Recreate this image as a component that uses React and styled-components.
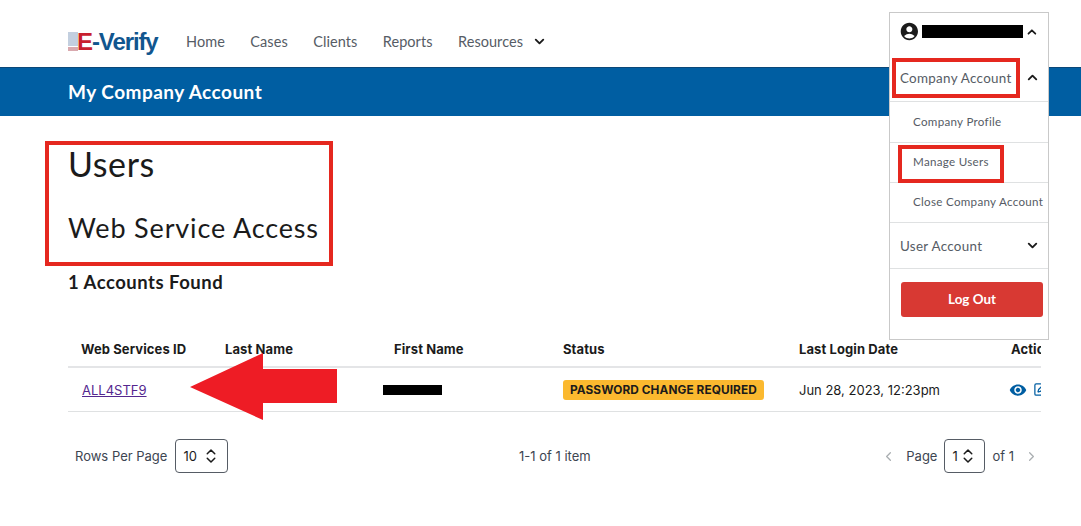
import React from 'react'
import styled, { createGlobalStyle } from 'styled-components'
import { ChevronDown, ChevronLeft, ChevronRight, ChevronUp, ChevronsUpDown, SquarePen } from 'lucide-react'
import { MdAccountCircle, MdVisibility } from 'react-icons/md'

const GlobalStyle = createGlobalStyle`
  html, body {
    margin: 0;
    padding: 0;
    background: #fff;
    overflow: hidden;
  }
  body {
    font-family: Lato, "Open Sans", sans-serif;
    color: #1b1b1b;
  }
`

const Page = styled.div`
  position: relative;
  width: 1081px;
  height: 526px;
  overflow: hidden;
`

const Header = styled.header`
  height: 67px;
  padding: 16px 0 0 68px;
  display: flex;
  align-items: center;
  box-sizing: border-box;
`

const Logo = styled.div`
  display: flex;
  align-items: center;
  width: 118px;
  font-family: "Liberation Sans", Arial, sans-serif;
  font-weight: 700;
  font-size: 24px;
  letter-spacing: -1.1px;
  color: #11568f;
  svg {
    margin-right: -1px;
  }
  span {
    color: #c8202f;
  }
`

const Nav = styled.nav`
  display: flex;
  align-items: center;
  gap: 25.5px;
`

const NavLink = styled.a`
  display: flex;
  align-items: center;
  gap: 9px;
  font-size: 14.5px;
  letter-spacing: 0.05px;
  color: #565c65;
`

const TitleBar = styled.div`
  height: 49px;
  padding: 0 0 1px 68px;
  display: flex;
  align-items: center;
  background: #005ea2;
  border-top: 1px solid #0b4778;
  box-sizing: border-box;
  color: #fff;
  font-size: 19px;
  font-weight: 700;
  letter-spacing: 0.47px;
`

const Content = styled.main`
  padding: 28px 40px 0 68px;
`

const Title = styled.h1`
  margin: 0;
  font-size: 34px;
  line-height: 40px;
  font-weight: 400;
  letter-spacing: 0.6px;
`

const SubTitle = styled.h2`
  margin: 27px 0 0;
  font-size: 27px;
  line-height: 34px;
  font-weight: 400;
  letter-spacing: 0.85px;
`

const Found = styled.h3`
  margin: 25px 0 0;
  font-size: 18.5px;
  line-height: 24px;
  font-weight: 700;
  letter-spacing: 0.5px;
`

const Table = styled.div`
  margin-top: 47px;
  overflow: hidden;
  font-family: Inter, Roboto, sans-serif;
`

const Row = styled.div`
  display: grid;
  grid-template-columns: 144px 169px 169px 236px 212px 100px;
  width: 1100px;
  padding-left: 13px;
  box-sizing: border-box;
  align-items: center;
  height: ${props => (props.$head ? '27px' : '44px')};
  padding-bottom: ${props => (props.$head ? '10px' : '0')};
  border-bottom: ${props => (props.$head ? '2px solid #e4e5e7' : '1px solid #dfe1e2')};
  font-size: 13px;
  font-weight: ${props => (props.$head ? 700 : 400)};
  letter-spacing: ${props => (props.$head ? '0.1px' : '0')};
  white-space: nowrap;
`

const IdLink = styled.a`
  padding-left: 1px;
  color: #54278f;
  text-decoration: underline;
`

const Redacted = styled.div`
  width: ${props => props.$width}px;
  height: ${props => props.$height}px;
  background: #000;
`

const NameRedacted = styled(Redacted)`
  margin-left: -11px;
`

const Badge = styled.span`
  justify-self: start;
  padding: 0 7px;
  line-height: 20px;
  border-radius: 3px;
  background: #fbb92f;
  font-size: 11.8px;
  font-weight: 700;
  letter-spacing: 0.1px;
`

const Actions = styled.div`
  display: flex;
  align-items: center;
  gap: 6px;
  color: #005ea2;
  margin-left: -2px;
`

const Pagination = styled.div`
  margin-top: 27px;
  padding: 0 2px 0 7px;
  display: flex;
  align-items: center;
  justify-content: space-between;
  font-family: Inter, Roboto, sans-serif;
  font-size: 13px;
  color: #3d4551;
`

const PageGroup = styled.div`
  display: flex;
  align-items: center;
  gap: ${props => props.$gap}px;
`

const PrevIcon = styled(ChevronLeft)`
  margin-right: 3px;
`

const NextIcon = styled(ChevronRight)`
  margin-left: 3px;
`

const Stepper = styled.div`
  display: flex;
  align-items: center;
  justify-content: space-between;
  width: ${props => props.$width}px;
  height: 34px;
  padding: 0 7px 0 7px;
  box-sizing: border-box;
  border: 1px solid #565c65;
  border-radius: 4px;
  color: #1b1b1b;
`

const Menu = styled.aside`
  position: absolute;
  top: 12px;
  left: 889px;
  width: 160px;
  height: 328px;
  box-sizing: border-box;
  background: #fff;
  border: 1px solid #c9c9c9;
  color: #565c65;
`

const MenuTop = styled.div`
  height: 37px;
  padding: 0 9px;
  display: flex;
  align-items: center;
  color: #1b1b1b;
  svg:first-child {
    margin-right: 2px;
  }
  svg:last-child {
    margin-left: 2px;
  }
`

const MenuRow = styled.div`
  height: ${props => props.$height}px;
  padding: ${props => props.$top || 0}px 8px ${props => (props.$sub ? 2 : 0)}px ${props => (props.$sub ? 23 : 10)}px;
  display: flex;
  align-items: center;
  justify-content: space-between;
  box-sizing: border-box;
  border-bottom: 1px solid #dfe1e2;
  font-size: ${props => (props.$sub ? '11.6px' : '13.4px')};
  letter-spacing: 0.3px;
  white-space: nowrap;
  svg {
    color: #1b1b1b;
  }
`

const LogOut = styled.button`
  display: block;
  width: 142px;
  height: 35px;
  margin: 13px 0 0 11px;
  padding: 0 0 1px;
  border: 0;
  border-radius: 3px;
  background: #d83933;
  color: #fff;
  font-family: inherit;
  font-size: 13.4px;
  font-weight: 700;
`

const Callout = styled.div`
  position: absolute;
  top: ${props => props.$top}px;
  left: ${props => props.$left}px;
  width: ${props => props.$width}px;
  height: ${props => props.$height}px;
  box-sizing: border-box;
  border: 4px solid #e5281f;
  pointer-events: none;
`

const Arrow = styled.svg`
  position: absolute;
  top: 353px;
  left: 190px;
`

const App = () => (
  <Page>
    <GlobalStyle />
    <Header>
      <Logo>
        <svg width="10" height="20" viewBox="0 0 10 20">
          <rect width="10" height="14" fill="#c3cfdf" />
          <rect y="15" width="10" height="4" fill="#d9a9ae" />
        </svg>
        <span>E</span>-Verify
      </Logo>
      <Nav>
        <NavLink>Home</NavLink>
        <NavLink>Cases</NavLink>
        <NavLink>Clients</NavLink>
        <NavLink>Reports</NavLink>
        <NavLink>
          Resources
          <ChevronDown size={15} strokeWidth={3} color="#1b1b1b" />
        </NavLink>
      </Nav>
    </Header>
    <TitleBar>My Company Account</TitleBar>
    <Content>
      <Title>Users</Title>
      <SubTitle>Web Service Access</SubTitle>
      <Found>1 Accounts Found</Found>
      <Table>
        <Row $head>
          <div>Web Services ID</div>
          <div>Last Name</div>
          <div>First Name</div>
          <div>Status</div>
          <div>Last Login Date</div>
          <div>Actions</div>
        </Row>
        <Row>
          <IdLink>ALL4STF9</IdLink>
          <div />
          <NameRedacted $width={59} $height={10} />
          <Badge>PASSWORD CHANGE REQUIRED</Badge>
          <div>Jun 28, 2023, 12:23pm</div>
          <Actions>
            <MdVisibility size={18} />
            <SquarePen size={15} strokeWidth={2} />
          </Actions>
        </Row>
      </Table>
      <Pagination>
        <PageGroup $gap={8}>
          Rows Per Page
          <Stepper $width={53}>
            10
            <ChevronsUpDown size={18} strokeWidth={2} />
          </Stepper>
        </PageGroup>
        <div>1-1 of 1 item</div>
        <PageGroup $gap={7}>
          <PrevIcon size={15} color="#a9aeb1" />
          <span>Page</span>
          <Stepper $width={41}>
            1
            <ChevronsUpDown size={18} strokeWidth={2} />
          </Stepper>
          <span>of 1</span>
          <NextIcon size={15} color="#a9aeb1" />
        </PageGroup>
      </Pagination>
    </Content>
    <Menu>
      <MenuTop>
        <MdAccountCircle size={21} />
        <Redacted $width={103} $height={13} />
        <ChevronUp size={14} strokeWidth={3} />
      </MenuTop>
      <MenuRow $height={52} $top={4}>
        Company Account
        <ChevronUp size={15} strokeWidth={3} />
      </MenuRow>
      <MenuRow $sub $height={41}>Company Profile</MenuRow>
      <MenuRow $sub $height={40}>Manage Users</MenuRow>
      <MenuRow $sub $height={40}>Close Company Account</MenuRow>
      <MenuRow $height={46}>
        User Account
        <ChevronDown size={15} strokeWidth={3} />
      </MenuRow>
      <LogOut>Log Out</LogOut>
    </Menu>
    <Callout $top={141} $left={45} $width={288} $height={125} />
    <Callout $top={58} $left={892} $width={128} $height={40} />
    <Callout $top={145} $left={898} $width={106} $height={38} />
    <Arrow width="148" height="68" viewBox="0 0 148 68">
      <polygon points="0,34 73,0 73,16 147,16 147,50 73,50 73,67" fill="#ee1c25" />
    </Arrow>
  </Page>
)

export default App
